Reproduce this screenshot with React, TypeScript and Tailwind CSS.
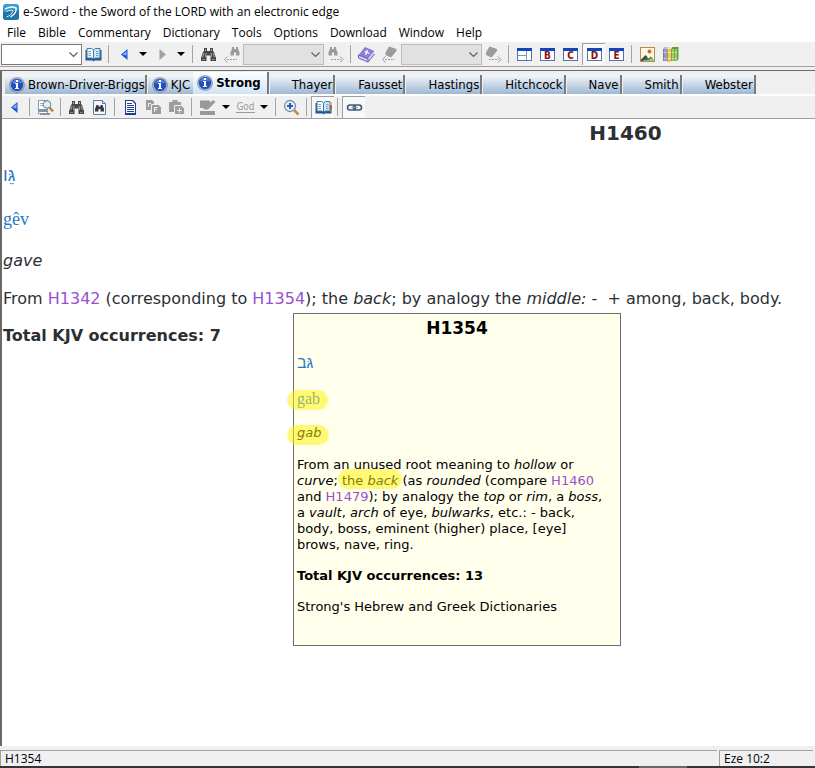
import { ReactNode } from 'react'
import clsx from 'clsx'

const menus = [
  'File',
  'Bible',
  'Commentary',
  'Dictionary',
  'Tools',
  'Options',
  'Download',
  'Window',
  'Help',
]

const tabs = [
  { name: 'Brown-Driver-Briggs', info: true },
  { name: 'KJC', info: true },
  { name: 'Strong', info: true, active: true },
  { name: 'Thayer' },
  { name: 'Fausset' },
  { name: 'Hastings' },
  { name: 'Hitchcock' },
  { name: 'Nave' },
  { name: 'Smith' },
  { name: 'Webster' },
]

interface IconProps {
  children: ReactNode
}

function Icon({ children }: IconProps) {
  return (
    <svg width="17" height="17" viewBox="0 0 17 17" aria-hidden="true">
      {children}
    </svg>
  )
}

function AppLogo() {
  return (
    <svg width="16" height="16" viewBox="0 0 16 16" aria-hidden="true">
      <rect width="16" height="16" rx="3" fill="#3a9ccb" />
      <path d="M0 8l16-2v7a3 3 0 0 1-3 3H3a3 3 0 0 1-3-3z" fill="#1f74a8" />
      <path
        d="M2 5c3.500-1.800 8-2.500 11-1 .8 3-1.500 6.500-5.500 9"
        fill="none"
        stroke="#fff"
        strokeWidth="1.400"
      />
      <path
        d="M3 7.500c2.500-1 5-1.400 7-1M3.500 13c3-1 5.500-3.500 6.500-6"
        fill="none"
        stroke="#d7eef8"
      />
    </svg>
  )
}

function InfoIcon() {
  return (
    <svg width="16" height="16" viewBox="0 0 16 16" aria-hidden="true">
      <circle cx="8" cy="8" r="7.800" fill="#85878c" />
      <circle cx="8" cy="8" r="6.900" fill="#c3c7cf" />
      <circle cx="8" cy="8" r="6.200" fill="#1f4fc4" />
      <path d="M3 6.500a5.200 5.200 0 0 1 10 0c-3-1.200-7-1.200-10 0z" fill="#5b86e2" />
      <rect x="7" y="3" width="2" height="2" fill="#fff" />
      <path d="M6 6h3v5h1v1H6v-1h1V7H6z" fill="#fff" />
    </svg>
  )
}

function Arrow({ direction }: { direction: 'left' | 'right' }) {
  return (
    <Icon>
      {direction === 'left' ? (
        <>
          <path d="M11.500 3v11L5 8.500z" fill="#1f56d6" />
          <path d="M10.500 5v4.500L6.500 8.500z" fill="#7fb0f8" />
        </>
      ) : (
        <path d="M5.500 3v11L12 8.500z" fill="#a2a2a2" />
      )}
    </Icon>
  )
}

function OpenBook({ marks }: { marks?: boolean }) {
  return (
    <Icon>
      <path d="M.5 4h16v10.500h-7l-1 1-1-1h-7z" fill="#24568f" />
      <path d="M2 2.500h4.500l2 1.500v9l-2-1H2z" fill="#f3fafd" stroke="#3a7ba9" />
      <path d="M15 2.500h-4.500l-2 1.500v9l2-1H15z" fill="#cfe8f5" stroke="#3a7ba9" />
      <path
        d="M3.500 5.500H6M3.500 7.500H6M3.500 9.500H6M11 5.500h2.500M11 7.500h2.500M11 9.500h2.500"
        stroke="#7f9eb5"
        fill="none"
      />
      {marks && (
        <>
          <rect x="15" y="3" width="2" height="3" fill="#e7b93b" />
          <rect x="15" y="7" width="2" height="3" fill="#d2483c" />
          <rect x="15" y="11" width="2" height="2" fill="#5aa845" />
        </>
      )}
    </Icon>
  )
}

function Binoculars() {
  return (
    <Icon>
      <path
        d="M4 2h3v3h3V2h3v3l1 1 2 6v3h-5.500V9.500h-4V15H1v-3l2-6 1-1z"
        fill="#474747"
      />
      <path
        d="M5.500 3v2M11.500 3v2M4 7l-1.500 4M6 7l-.5 4M11 7l.5 4M13 7l1.500 4"
        stroke="#a8a8a8"
        fill="none"
      />
      <path d="M2.500 13.500H5M12 13.500h2.500" stroke="#8f8f8f" fill="none" />
    </Icon>
  )
}

function DottedArrow({ direction }: { direction: 'left' | 'right' }) {
  return direction === 'left' ? (
    <>
      <path d="M4 13.500h10" stroke="#9b9b9b" strokeDasharray="2 1" />
      <path d="M4.500 10.500l-3 3 3 3" stroke="#9b9b9b" fill="none" />
    </>
  ) : (
    <>
      <path d="M4 13.500h10" stroke="#9b9b9b" strokeDasharray="2 1" />
      <path d="M13 10.500l3 3-3 3" stroke="#9b9b9b" fill="none" />
    </>
  )
}

function BinocularsStep({ direction }: { direction: 'left' | 'right' }) {
  return (
    <Icon>
      <path
        d={
          direction === 'left'
            ? 'M9 1h2v2h2V1h2v2l1.500 3v3.500H13V6.500h-2v3H7.500V6L9 3z'
            : 'M3 1h2v2h2V1h2v2l1.500 3v3.500H7V6.500H5v3H1.500V6L3 3z'
        }
        fill="#9b9b9b"
      />
      <DottedArrow direction={direction} />
    </Icon>
  )
}

function BibleIcon() {
  return (
    <Icon>
      <path d="M7 1l9.500 4L10 13 .5 9z" fill="#8d7cd6" />
      <path d="M.5 9L10 13l6.500-8v3L10 16 .5 12z" fill="#d9d4f2" />
      <path d="M.5 9v3L10 16V13zM10 16l6.500-8" stroke="#6a56b8" fill="none" />
      <path
        d="M9.500 4l-2 5M6.500 5.500l5 2"
        stroke="#fff"
        fill="none"
        strokeWidth="1.300"
      />
    </Icon>
  )
}

function BookStep({ direction }: { direction: 'left' | 'right' }) {
  return (
    <Icon>
      <path
        d={
          direction === 'left'
            ? 'M8 .5L15.500 3v2L10 11.500 4.500 9V6.500z'
            : 'M4.500 .5L12 3v2L6.500 11.500 1 9V6.500z'
        }
        fill="#9b9b9b"
      />
      <DottedArrow direction={direction} />
    </Icon>
  )
}

function WindowIcon({ letter }: { letter?: string }) {
  return (
    <Icon>
      <rect x="1.500" y="2.500" width="14" height="12" fill="#fff" stroke="#5573ab" />
      <rect x="1" y="2" width="15" height="3" fill="#0f46bd" />
      {letter ? (
        <text
          x="8.500"
          y="13"
          textAnchor="middle"
          fontFamily="DejaVu Sans Condensed"
          fontWeight="bold"
          fontSize="10"
          fill="#8e0f14"
        >
          {letter}
        </text>
      ) : (
        <path d="M2 9.500h8M10.500 5v9" stroke="#7d93c4" fill="none" />
      )}
    </Icon>
  )
}

function PictureIcon() {
  return (
    <Icon>
      <rect x="1.500" y="1.500" width="14" height="14" fill="#fdf6e0" stroke="#b58e45" />
      <circle cx="10.500" cy="5.500" r="2" fill="#e2603a" />
      <path d="M2 14.500l4.500-5 3 3 2.500-2 3 4z" fill="#2f7a45" />
      <path d="M2 15v-1.500L6.500 9l2 2L4 15z" fill="#3f4f56" />
      <path d="M9 15l3-3 3 3z" fill="#9cd179" />
    </Icon>
  )
}

function LibraryIcon() {
  return (
    <Icon>
      <path d="M1 3l1.500-2H6L5 3z" fill="#b9b4e0" />
      <rect x="1" y="3" width="4" height="12" fill="#9a96d0" />
      <rect x="5" y="3" width="4" height="13" fill="#f0c858" />
      <rect x="9" y="3" width="6" height="12" fill="#9bd05a" />
      <path d="M9 3l1.500-2h6L15 3zM15 3l1.500-2v12L15 15z" fill="#5f9f3a" />
      <path d="M5 3l1.500-2h3.500L9 3z" fill="#f5e0a0" />
      <path d="M1 6.500h4M1 12.500h4M5 6.500h4M5 12.500h4M9 6.500h6M9 12.500h6" stroke="#fff" opacity=".45" />
      <path d="M1.500 3v12M5.500 3v12M9.500 3v12M12.500 3v12" stroke="#4a5a35" opacity=".4" />
    </Icon>
  )
}

function PreviewIcon() {
  return (
    <Icon>
      <path d="M1.500 1.500h9v13h-9z" fill="#fff" stroke="#8b98a8" />
      <path d="M3 4.500h3M3 6.500h3" stroke="#a4b0be" />
      <path d="M1 10h9v3H1zM3 14h10v2H3z" fill="#8793a2" />
      <path d="M12.500 8.500l3.500 4" stroke="#c08537" strokeWidth="2.500" />
      <circle cx="10" cy="5.500" r="3.800" fill="#dcefff" stroke="#6b7b90" />
    </Icon>
  )
}

function FindInPage() {
  return (
    <Icon>
      <path d="M2.500 1.500h9l3 3v11h-12z" fill="#f2f7fd" stroke="#5f7da6" />
      <path d="M11.500 1.500v3h3" fill="#c6d8ee" stroke="#5f7da6" />
      <path d="M5.500 6h2v1.500h2V6h2l1.500 4v2.500H9.500V10h-2v2.500H4V10z" fill="#383838" />
    </Icon>
  )
}

function PageIcon() {
  return (
    <Icon>
      <path d="M3 1h8l3 3v12H3z" fill="#1f3f8c" />
      <path d="M4 2h6l3 3v9H4z" fill="#fff" />
      <path
        d="M5 4.500h5M5 6.500h7M5 8.500h7M5 10.500h7M5 12.500h7"
        stroke="#1c3d96"
      />
    </Icon>
  )
}

function CopyIcon() {
  return (
    <Icon>
      <path d="M1 1h6l2 2v8H1z" fill="#9d9d9d" />
      <path d="M6.500 5.500h7l3 3v7h-10z" fill="#9d9d9d" stroke="#efefef" />
      <path d="M3 4.500h3M3.500 4v4M9 8.500h4M9 10.500h3M9.500 8v5" stroke="#efefef" />
    </Icon>
  )
}

function PasteIcon() {
  return (
    <Icon>
      <path d="M1 3h3l1-2h4l1 2h3v10H1z" fill="#9d9d9d" />
      <path d="M6.500 6.500h7l3 3v6h-10z" fill="#9d9d9d" stroke="#efefef" />
      <path d="M11.500 9v5M9 11.500h5" stroke="#efefef" />
    </Icon>
  )
}

function HighlightIcon() {
  return (
    <Icon>
      <path d="M1 1.500h10v2L14 1l2.500 2L9 10.500H6L3.500 9H1z" fill="#999" />
      <path d="M1 12h15v4H1z" fill="#999" />
    </Icon>
  )
}

function ZoomIcon() {
  return (
    <Icon>
      <path d="M10.500 10.500l5 5" stroke="#c39142" strokeWidth="2.500" />
      <circle cx="7" cy="7" r="5.500" fill="#e3f1fd" stroke="#7b8ca6" strokeWidth="1.300" />
      <path d="M4 7h6M7 4v6" stroke="#2b5ca8" strokeWidth="2" />
    </Icon>
  )
}

function LinkIcon() {
  return (
    <Icon>
      <rect x="1.500" y="6" width="8" height="5" rx="2.500" fill="none" stroke="#3f5873" strokeWidth="1.600" />
      <rect x="7.500" y="6" width="8" height="5" rx="2.500" fill="none" stroke="#3f5873" strokeWidth="1.600" />
      <path d="M5.500 8.500h6" stroke="#7e9ab8" strokeWidth="1.300" />
    </Icon>
  )
}

interface ToolProps {
  label: string
  pressed?: boolean
  children: ReactNode
}

function Tool({ label, pressed, children }: ToolProps) {
  return (
    <button
      type="button"
      aria-label={label}
      className={clsx(
        'w-[23px] h-[22px] shrink-0 flex items-center justify-center',
        pressed &&
          'bg-[#f8f8f8] border-t border-l border-t-[#a0a0a0] border-l-[#a0a0a0]',
      )}
    >
      {children}
    </button>
  )
}

function Caret({ label }: { label: string }) {
  return (
    <button
      type="button"
      aria-label={label}
      className="w-[15px] h-[22px] shrink-0 flex items-center pl-[3px]"
    >
      <svg width="8" height="4" viewBox="0 0 8 4" aria-hidden="true">
        <path d="M0 0h8L4 4z" fill="#000" />
      </svg>
    </button>
  )
}

function Separator() {
  return (
    <div className="w-2 shrink-0 pl-[3px]">
      <div className="w-px h-[18px] bg-[#a3a3a3]" />
    </div>
  )
}

function Combo({ label, disabled }: { label: string; disabled?: boolean }) {
  return (
    <div className="relative w-[81px] h-[21px] shrink-0">
      <select
        aria-label={label}
        disabled={disabled}
        className={clsx(
          'w-full h-full appearance-none border',
          disabled ? 'bg-[#e1e1e1] border-[#bcbcbc]' : 'bg-white border-[#7a7a7a]',
        )}
      />
      <svg
        width="9"
        height="6"
        viewBox="0 0 9 6"
        aria-hidden="true"
        className="absolute right-1 top-2 pointer-events-none"
      >
        <path d="M.5 .5l4 4 4-4" fill="none" stroke="#5f5f5f" strokeWidth="1.200" />
      </svg>
    </div>
  )
}

function Ref({ children }: { children: string }) {
  return (
    <a href={`#${children}`} className="text-[#9a4fd0]">
      {children}
    </a>
  )
}

function Marked({ wide, children }: { wide?: boolean; children: ReactNode }) {
  return (
    <span className="relative">
      {children}
      <span
        className={clsx(
          'absolute h-5 rounded-[10px] bg-[#fff400]/50',
          wide ? 'top-0 -left-2.5 -right-2' : '-top-1 -left-1 -right-1',
        )}
      />
    </span>
  )
}

function EntryPopup() {
  return (
    <aside className="absolute left-[291px] top-[194px] w-[328px] h-[333px] border border-[#6d6d6d] bg-[#ffffec] px-[3px] pt-1 font-['DejaVu_Sans',sans-serif] text-[13px] leading-4 text-black">
      <h2 className="text-center text-[17px] leading-5 font-bold">H1354</h2>
      <p className="mt-[15px] text-base leading-5 text-[#2b78c8] font-['Liberation_Sans']">
        גּב
      </p>
      <p className="mt-4 text-base leading-5 text-[#2b78c8] font-['Liberation_Serif']">
        <Marked wide>gab</Marked>
      </p>
      <p className="mt-4 italic">
        <Marked wide>gab</Marked>
      </p>
      <p className="mt-4">
        From an unused root meaning to <i>hollow</i> or
        <br />
        <i>curve</i>;{' '}
        <Marked>
          the <i>back</i>
        </Marked>{' '}
        (as <i>rounded</i> (compare <Ref>H1460</Ref>
        <br />
        and <Ref>H1479</Ref>); by analogy the <i>top</i> or <i>rim</i>, a{' '}
        <i>boss</i>,<br />a <i>vault</i>, <i>arch</i> of eye, <i>bulwarks</i>,
        etc.: - back,
        <br />
        body, boss, eminent (higher) place, [eye]
        <br />
        brows, nave, ring.
      </p>
      <p className="mt-[15px] font-bold">Total KJV occurrences: 13</p>
      <p className="mt-[15px]">Strong&apos;s Hebrew and Greek Dictionaries</p>
    </aside>
  )
}

export default function App() {
  return (
    <div className="h-screen flex flex-col overflow-hidden bg-[#f0f0f0] text-black font-['Open_Sans',sans-serif] text-xs">
      <header className="bg-white shrink-0">
        <div className="h-[23px] flex items-center gap-1 pl-[3px]">
          <AppLogo />
          <h1>e-Sword - the Sword of the LORD with an electronic edge</h1>
        </div>
        <nav className="h-[19px] flex items-center gap-3 pl-[7px]">
          {menus.map((menu) => (
            <button key={menu} type="button">
              {menu}
            </button>
          ))}
        </nav>
      </header>

      <div className="h-[25px] shrink-0 flex items-center pl-px border-b border-[#a0a0a0]">
        <Combo label="Look up reference" />
        <Tool label="Go to reference">
          <OpenBook />
        </Tool>
        <Separator />
        <Tool label="Back">
          <Arrow direction="left" />
        </Tool>
        <Caret label="Back history" />
        <Tool label="Forward">
          <Arrow direction="right" />
        </Tool>
        <Caret label="Forward history" />
        <Separator />
        <Tool label="Search">
          <Binoculars />
        </Tool>
        <Tool label="Previous result">
          <BinocularsStep direction="left" />
        </Tool>
        <Combo label="Search results" disabled />
        <Tool label="Next result">
          <BinocularsStep direction="right" />
        </Tool>
        <Separator />
        <Tool label="Verse list">
          <BibleIcon />
        </Tool>
        <Tool label="Previous verse">
          <BookStep direction="left" />
        </Tool>
        <Combo label="Verses" disabled />
        <Tool label="Next verse">
          <BookStep direction="right" />
        </Tool>
        <Separator />
        <Tool label="Default layout">
          <WindowIcon />
        </Tool>
        <Tool label="Bible window">
          <WindowIcon letter="B" />
        </Tool>
        <Tool label="Commentary window">
          <WindowIcon letter="C" />
        </Tool>
        <Tool label="Dictionary window" pressed>
          <WindowIcon letter="D" />
        </Tool>
        <Tool label="Editor window">
          <WindowIcon letter="E" />
        </Tool>
        <Separator />
        <Tool label="Graphics viewer">
          <PictureIcon />
        </Tool>
        <Tool label="Reference library">
          <LibraryIcon />
        </Tool>
      </div>

      <main className="mt-[3px] flex-1 min-h-0 flex flex-col border-t border-l-2 border-[#6a6a6a]">
        <div
          role="tablist"
          className="h-[25px] shrink-0 flex items-end pl-[3px] border-b-2 border-white font-['DejaVu_Sans_Condensed','Noto_Sans',sans-serif] text-[13px]"
        >
          {tabs.map((tab) => (
            <button
              key={tab.name}
              type="button"
              role="tab"
              aria-selected={!!tab.active}
              className={clsx(
                'shrink-0 flex items-center whitespace-nowrap',
                tab.active
                  ? 'h-[22px] pr-1.5 font-bold bg-linear-to-b from-white to-[#cfe3f8]'
                  : 'h-[19px] bg-linear-to-b from-[#f4f7fa] to-[#9db8d3]',
                tab.info ? 'gap-[3px] pl-1' : 'pl-[22px] pr-px',
                tab.name === 'KJC'
                  ? 'pr-[3px]'
                  : 'mr-px border-r-2 border-[#7a7a7a]',
              )}
            >
              {tab.info && <InfoIcon />}
              {tab.name}
            </button>
          ))}
        </div>

        <div className="h-[23px] shrink-0 flex items-center pl-px border-b border-[#a0a0a0]">
          <Tool label="Previous topic">
            <Arrow direction="left" />
          </Tool>
          <Separator />
          <Tool label="Preview">
            <PreviewIcon />
          </Tool>
          <Separator />
          <Tool label="Search dictionaries">
            <Binoculars />
          </Tool>
          <Tool label="Find in topic">
            <FindInPage />
          </Tool>
          <Separator />
          <Tool label="Select all">
            <PageIcon />
          </Tool>
          <Tool label="Copy">
            <CopyIcon />
          </Tool>
          <Tool label="Paste">
            <PasteIcon />
          </Tool>
          <Separator />
          <Tool label="Highlight">
            <HighlightIcon />
          </Tool>
          <Caret label="Highlight colors" />
          <Tool label="Text effect">
            <span className="font-['DejaVu_Sans_Condensed'] text-[10px] leading-[10px] text-[#9b9b9b] border-b border-[#9b9b9b]">
              God
            </span>
          </Tool>
          <Caret label="Text effects" />
          <Separator />
          <Tool label="Zoom">
            <ZoomIcon />
          </Tool>
          <Separator />
          <Tool label="Synchronize dictionaries" pressed>
            <OpenBook marks />
          </Tool>
          <Separator />
          <Tool label="Link to Bible" pressed>
            <LinkIcon />
          </Tool>
        </div>

        <div className="relative flex-1 min-h-0 overflow-hidden bg-white">
          <article className="min-w-[1246px] pl-px pt-0.5 font-['DejaVu_Sans',sans-serif] text-base leading-5 text-[#2b2f33]">
            <h2 className="text-center text-xl leading-6 font-bold">H1460</h2>
            <p className="mt-[18px] text-lg leading-6 text-[#2b78c8] font-['Liberation_Sans']">
              גֵּו
            </p>
            <p className="mt-5 text-lg leading-6 text-[#2b78c8] font-['Liberation_Serif']">
              gêv
            </p>
            <p className="mt-5 italic">gave</p>
            <p className="mt-[18px]">
              From <Ref>H1342</Ref> (corresponding to <Ref>H1354</Ref>); the{' '}
              <i>back</i>; by analogy the <i>middle:</i> -&nbsp; + among, back,
              body.
            </p>
            <p className="mt-[17px] font-bold">Total KJV occurrences: 7</p>
          </article>
          <EntryPopup />
        </div>
      </main>

      <footer className="shrink-0">
        <div className="h-5 flex items-end gap-0.5 pr-0.5">
          <div className="flex-1 h-4 flex items-center pl-1 border-t border-l border-[#a0a0a0]">
            H1354
          </div>
          <div className="w-[94px] h-4 flex items-center pl-1 border-t border-l border-[#a0a0a0]">
            Eze 10:2
          </div>
        </div>
        <div className="h-0.5 flex justify-end pr-32 bg-[#333438]">
          <div className="w-12 bg-[#66676b]" />
        </div>
      </footer>
    </div>
  )
}
